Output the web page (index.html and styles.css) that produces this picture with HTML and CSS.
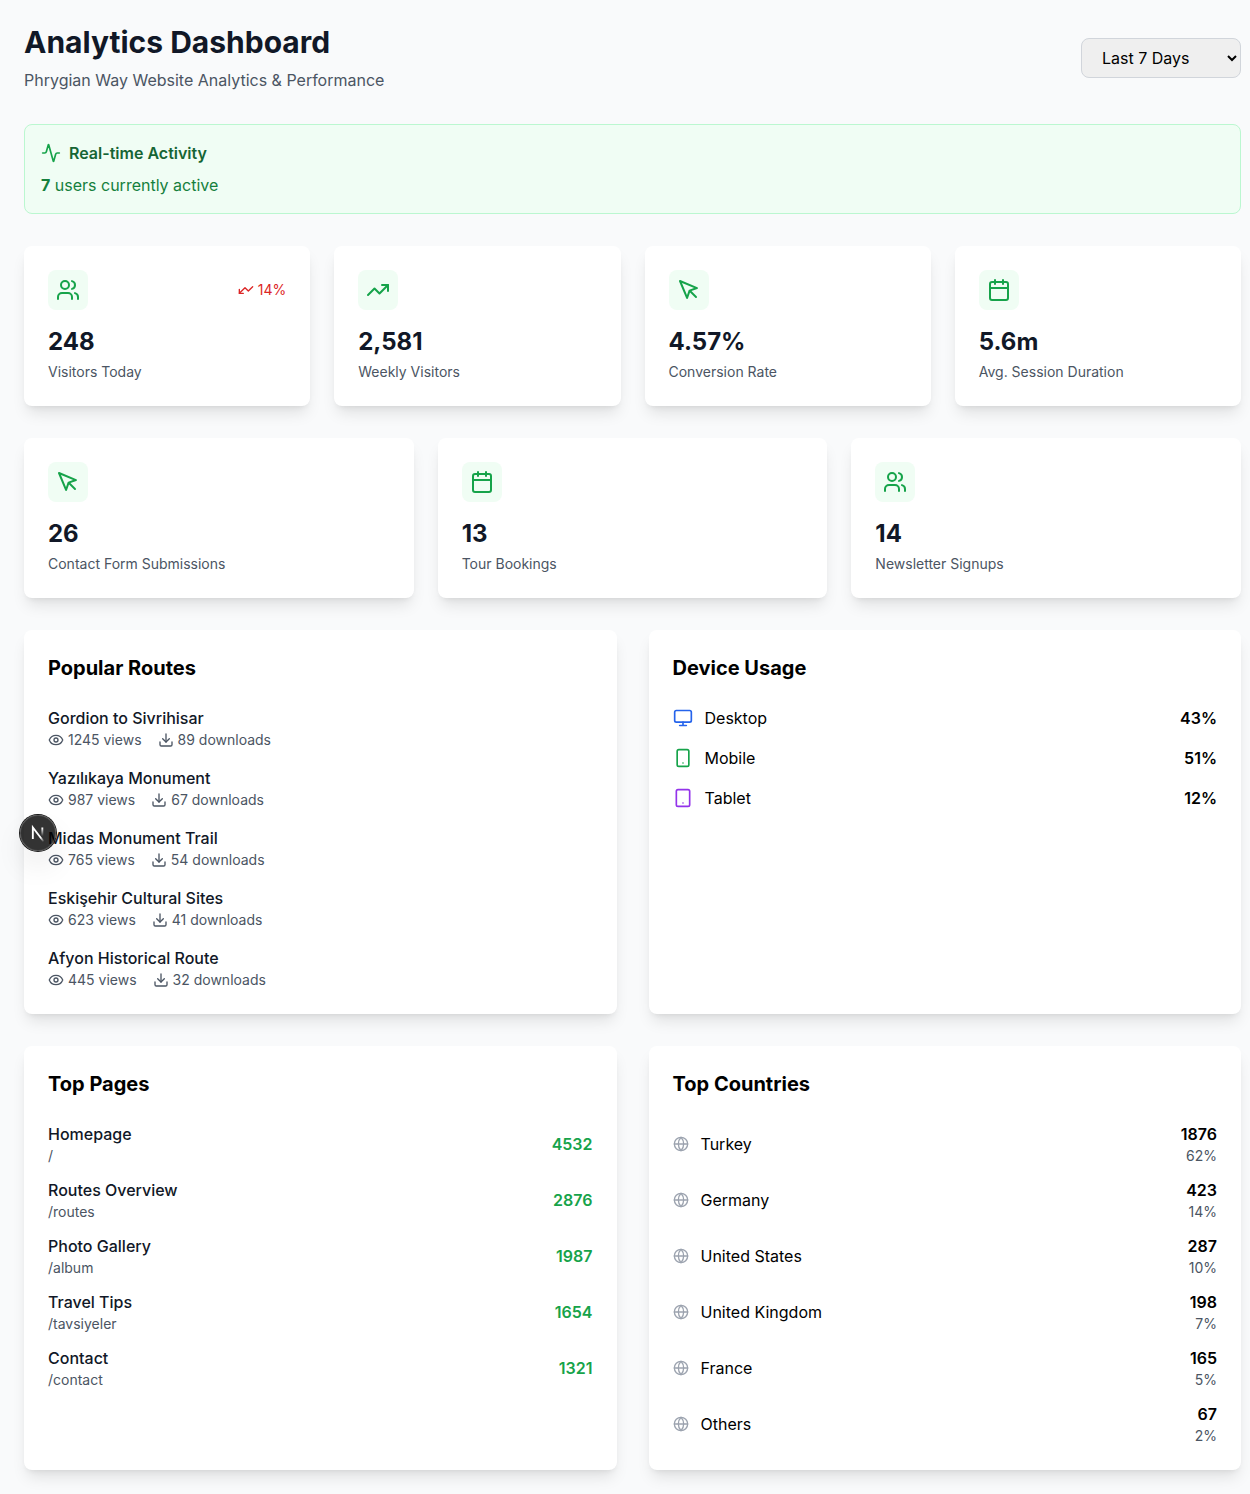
FILE: index.html
```
<!DOCTYPE html>
<html lang="en">
<head>
<meta charset="utf-8">
<meta name="viewport" content="width=device-width, initial-scale=1">
<title>Analytics Dashboard</title>
<link rel="stylesheet" href="styles.css">
</head>
<body>
<svg class="sprite" aria-hidden="true">
  <symbol id="users" viewBox="0 0 24 24"><path d="M16 21v-2a4 4 0 0 0-4-4H6a4 4 0 0 0-4 4v2"/><circle cx="9" cy="7" r="4"/><path d="M22 21v-2a4 4 0 0 0-3-3.87"/><path d="M16 3.13a4 4 0 0 1 0 7.75"/></symbol>
  <symbol id="trend" viewBox="0 0 24 24"><path d="M22 7 13.5 15.5 8.5 10.5 2 17"/><path d="M16 7h6v6"/></symbol>
  <symbol id="pointer" viewBox="0 0 24 24"><path d="m3 3 7.07 16.97 2.51-7.39 7.39-2.51L3 3z"/><path d="m13 13 6 6"/></symbol>
  <symbol id="calendar" viewBox="0 0 24 24"><path d="M8 2v4M16 2v4"/><rect width="18" height="18" x="3" y="4" rx="2"/><path d="M3 10h18"/></symbol>
  <symbol id="activity" viewBox="0 0 24 24"><path d="M22 12h-2.48a2 2 0 0 0-1.93 1.46l-2.35 8.36a.25.25 0 0 1-.48 0L9.24 2.18a.25.25 0 0 0-.48 0l-2.35 8.36A2 2 0 0 1 4.49 12H2"/></symbol>
  <symbol id="eye" viewBox="0 0 24 24"><path d="M2.062 12.348a1 1 0 0 1 0-.696 10.75 10.75 0 0 1 19.876 0 1 1 0 0 1 0 .696 10.75 10.75 0 0 1-19.876 0"/><circle cx="12" cy="12" r="3"/></symbol>
  <symbol id="download" viewBox="0 0 24 24"><path d="M21 15v4a2 2 0 0 1-2 2H5a2 2 0 0 1-2-2v-4"/><path d="m7 10 5 5 5-5"/><path d="M12 15V3"/></symbol>
  <symbol id="monitor" viewBox="0 0 24 24"><rect width="20" height="14" x="2" y="3" rx="2"/><path d="M8 21h8M12 17v4"/></symbol>
  <symbol id="phone" viewBox="0 0 24 24"><rect width="14" height="20" x="5" y="2" rx="2"/><path d="M12 18h.01"/></symbol>
  <symbol id="tablet" viewBox="0 0 24 24"><rect width="16" height="20" x="4" y="2" rx="2"/><path d="M12 18h.01"/></symbol>
  <symbol id="globe" viewBox="0 0 24 24"><circle cx="12" cy="12" r="10"/><path d="M12 2a14.5 14.5 0 0 0 0 20 14.5 14.5 0 0 0 0-20"/><path d="M2 12h20"/></symbol>
</svg>

<main class="page">
  <header class="header">
    <div>
      <h1 class="title">Analytics Dashboard</h1>
      <p class="subtitle">Phrygian Way Website Analytics &amp; Performance</p>
    </div>
    <select class="range" aria-label="Date range">
      <option>Last 7 Days</option>
      <option>Last 30 Days</option>
      <option>Last 90 Days</option>
    </select>
  </header>

  <section class="realtime">
    <h2 class="realtime-title"><svg class="icon icon-md"><use href="#activity"/></svg>Real-time Activity</h2>
    <p class="realtime-text"><strong>7</strong> users currently active</p>
  </section>

  <section class="grid grid-4">
    <article class="card">
      <div class="stat-top">
        <span class="badge"><svg class="icon icon-lg"><use href="#users"/></svg></span>
        <span class="change"><svg class="icon icon-sm flipped"><use href="#trend"/></svg>14%</span>
      </div>
      <p class="value">248</p>
      <p class="label">Visitors Today</p>
    </article>
    <article class="card">
      <div class="stat-top"><span class="badge"><svg class="icon icon-lg"><use href="#trend"/></svg></span></div>
      <p class="value">2,581</p>
      <p class="label">Weekly Visitors</p>
    </article>
    <article class="card">
      <div class="stat-top"><span class="badge"><svg class="icon icon-lg"><use href="#pointer"/></svg></span></div>
      <p class="value">4.57%</p>
      <p class="label">Conversion Rate</p>
    </article>
    <article class="card">
      <div class="stat-top"><span class="badge"><svg class="icon icon-lg"><use href="#calendar"/></svg></span></div>
      <p class="value">5.6m</p>
      <p class="label">Avg. Session Duration</p>
    </article>
  </section>

  <section class="grid grid-3">
    <article class="card">
      <div class="stat-top"><span class="badge"><svg class="icon icon-lg"><use href="#pointer"/></svg></span></div>
      <p class="value">26</p>
      <p class="label">Contact Form Submissions</p>
    </article>
    <article class="card">
      <div class="stat-top"><span class="badge"><svg class="icon icon-lg"><use href="#calendar"/></svg></span></div>
      <p class="value">13</p>
      <p class="label">Tour Bookings</p>
    </article>
    <article class="card">
      <div class="stat-top"><span class="badge"><svg class="icon icon-lg"><use href="#users"/></svg></span></div>
      <p class="value">14</p>
      <p class="label">Newsletter Signups</p>
    </article>
  </section>

  <div class="grid grid-2">
    <section class="card">
      <h2 class="card-title">Popular Routes</h2>
      <ul class="list">
        <li>
          <h3 class="name">Gordion to Sivrihisar</h3>
          <p class="meta"><span class="meta-item"><svg class="icon icon-sm"><use href="#eye"/></svg>1245 views</span><span class="meta-item"><svg class="icon icon-sm"><use href="#download"/></svg>89 downloads</span></p>
        </li>
        <li>
          <h3 class="name">Yazılıkaya Monument</h3>
          <p class="meta"><span class="meta-item"><svg class="icon icon-sm"><use href="#eye"/></svg>987 views</span><span class="meta-item"><svg class="icon icon-sm"><use href="#download"/></svg>67 downloads</span></p>
        </li>
        <li>
          <h3 class="name">Midas Monument Trail</h3>
          <p class="meta"><span class="meta-item"><svg class="icon icon-sm"><use href="#eye"/></svg>765 views</span><span class="meta-item"><svg class="icon icon-sm"><use href="#download"/></svg>54 downloads</span></p>
        </li>
        <li>
          <h3 class="name">Eskişehir Cultural Sites</h3>
          <p class="meta"><span class="meta-item"><svg class="icon icon-sm"><use href="#eye"/></svg>623 views</span><span class="meta-item"><svg class="icon icon-sm"><use href="#download"/></svg>41 downloads</span></p>
        </li>
        <li>
          <h3 class="name">Afyon Historical Route</h3>
          <p class="meta"><span class="meta-item"><svg class="icon icon-sm"><use href="#eye"/></svg>445 views</span><span class="meta-item"><svg class="icon icon-sm"><use href="#download"/></svg>32 downloads</span></p>
        </li>
      </ul>
    </section>

    <section class="card">
      <h2 class="card-title">Device Usage</h2>
      <ul class="list">
        <li class="row"><span class="row-label"><svg class="icon icon-md blue"><use href="#monitor"/></svg>Desktop</span><span class="strong">43%</span></li>
        <li class="row"><span class="row-label"><svg class="icon icon-md green"><use href="#phone"/></svg>Mobile</span><span class="strong">51%</span></li>
        <li class="row"><span class="row-label"><svg class="icon icon-md purple"><use href="#tablet"/></svg>Tablet</span><span class="strong">12%</span></li>
      </ul>
    </section>
  </div>

  <div class="grid grid-2">
    <section class="card">
      <h2 class="card-title">Top Pages</h2>
      <ul class="list list-tight">
        <li class="row"><div><h3 class="name">Homepage</h3><p class="meta">/</p></div><span class="strong green">4532</span></li>
        <li class="row"><div><h3 class="name">Routes Overview</h3><p class="meta">/routes</p></div><span class="strong green">2876</span></li>
        <li class="row"><div><h3 class="name">Photo Gallery</h3><p class="meta">/album</p></div><span class="strong green">1987</span></li>
        <li class="row"><div><h3 class="name">Travel Tips</h3><p class="meta">/tavsiyeler</p></div><span class="strong green">1654</span></li>
        <li class="row"><div><h3 class="name">Contact</h3><p class="meta">/contact</p></div><span class="strong green">1321</span></li>
      </ul>
    </section>

    <section class="card">
      <h2 class="card-title">Top Countries</h2>
      <ul class="list list-tight">
        <li class="row"><span class="row-label"><svg class="icon icon-sm gray"><use href="#globe"/></svg>Turkey</span><div class="figures"><p class="strong">1876</p><p class="meta">62%</p></div></li>
        <li class="row"><span class="row-label"><svg class="icon icon-sm gray"><use href="#globe"/></svg>Germany</span><div class="figures"><p class="strong">423</p><p class="meta">14%</p></div></li>
        <li class="row"><span class="row-label"><svg class="icon icon-sm gray"><use href="#globe"/></svg>United States</span><div class="figures"><p class="strong">287</p><p class="meta">10%</p></div></li>
        <li class="row"><span class="row-label"><svg class="icon icon-sm gray"><use href="#globe"/></svg>United Kingdom</span><div class="figures"><p class="strong">198</p><p class="meta">7%</p></div></li>
        <li class="row"><span class="row-label"><svg class="icon icon-sm gray"><use href="#globe"/></svg>France</span><div class="figures"><p class="strong">165</p><p class="meta">5%</p></div></li>
        <li class="row"><span class="row-label"><svg class="icon icon-sm gray"><use href="#globe"/></svg>Others</span><div class="figures"><p class="strong">67</p><p class="meta">2%</p></div></li>
      </ul>
    </section>
  </div>
</main>

<button class="dev-button" type="button" aria-label="Open Next.js Dev Tools">
  <svg width="36" height="36" viewBox="0 0 36 36" fill="none">
    <defs>
      <linearGradient id="n-diagonal" x1="9.96" y1="11.12" x2="15.48" y2="17.97" gradientUnits="userSpaceOnUse"><stop stop-color="#fff"/><stop offset=".6" stop-color="#fff" stop-opacity="0"/></linearGradient>
      <linearGradient id="n-stem" x1="11.8" y1="1.4" x2="11.79" y2="9.63" gradientUnits="userSpaceOnUse"><stop stop-color="#fff"/><stop offset="1" stop-color="#fff" stop-opacity="0"/></linearGradient>
    </defs>
    <g transform="translate(10.5 11.5)" stroke-width="1.86">
      <path d="M13.3 15.2 2.34 1v11.6" stroke="url(#n-diagonal)"/>
      <path d="M11.825 1v11.6" stroke="url(#n-stem)"/>
    </g>
  </svg>
</button>
</body>
</html>
```
FILE: styles.css
```
* { box-sizing: border-box; }

body {
  position: relative;
  margin: 0;
  background: #f9fafb;
  color: #000;
  font: 16px/24px Inter, "Liberation Sans", sans-serif;
}

h1, h2, h3, p, ul { margin: 0; padding: 0; }
ul { list-style: none; }
.sprite { display: none; }

.page {
  display: flex;
  flex-direction: column;
  gap: 32px;
  padding: 24px 9px 24px 24px;
}

.header {
  display: flex;
  align-items: center;
  justify-content: space-between;
}
.title { font-size: 30px; line-height: 36px; font-weight: 700; color: #111827; }
.subtitle { margin-top: 8px; color: #4b5563; }
.range {
  width: 160px;
  height: 40px;
  padding: 8px 16px;
  border: 1px solid #d1d5db;
  border-radius: 8px;
  background: #efefef;
  color: #000;
  font: inherit;
}

.realtime {
  display: flex;
  flex-direction: column;
  gap: 8px;
  padding: 16px;
  border: 1px solid #bbf7d0;
  border-radius: 8px;
  background: #f0fdf4;
  color: #15803d;
}
.realtime-title {
  display: flex;
  align-items: center;
  gap: 8px;
  font-size: 16px;
  line-height: 24px;
  font-weight: 600;
  color: #166534;
}
.realtime-title .icon { color: #16a34a; }

.grid { display: grid; gap: 24px; }
.grid-4 { grid-template-columns: repeat(4, 1fr); }
.grid-3 { grid-template-columns: repeat(3, 1fr); }
.grid-2 { grid-template-columns: repeat(2, 1fr); gap: 32px; }

.card {
  padding: 24px;
  border-radius: 8px;
  background: #fff;
  box-shadow: 0 10px 15px -3px rgb(0 0 0 / 10%), 0 4px 6px -4px rgb(0 0 0 / 10%);
}
.card-title { margin-bottom: 24px; font-size: 20px; line-height: 28px; font-weight: 700; }

.stat-top {
  display: flex;
  align-items: center;
  justify-content: space-between;
  margin-bottom: 16px;
}
.badge {
  display: flex;
  padding: 8px;
  border-radius: 8px;
  background: #f0fdf4;
  color: #16a34a;
}
.change {
  display: flex;
  align-items: center;
  gap: 4px;
  font-size: 14px;
  line-height: 20px;
  color: #dc2626;
}
.value { font-size: 24px; line-height: 32px; font-weight: 700; color: #111827; }
.label { margin-top: 4px; font-size: 14px; line-height: 20px; color: #4b5563; }

.list { display: flex; flex-direction: column; gap: 16px; }
.list-tight { gap: 12px; }
.row { display: flex; align-items: center; justify-content: space-between; }
.row-label { display: flex; align-items: center; gap: 12px; }
.name { font-size: 16px; line-height: 24px; font-weight: 500; color: #111827; }
.meta { display: flex; gap: 16px; font-size: 14px; line-height: 20px; color: #4b5563; }
.meta-item { display: flex; align-items: center; gap: 4px; }
.strong { font-weight: 600; }
.figures { text-align: right; }
.figures .meta { display: block; }

.icon {
  flex: none;
  fill: none;
  stroke: currentColor;
  stroke-width: 2;
  stroke-linecap: round;
  stroke-linejoin: round;
}
.icon-sm { width: 16px; height: 16px; }
.icon-md { width: 20px; height: 20px; }
.icon-lg { width: 24px; height: 24px; }
.flipped { transform: rotate(180deg); }

.blue { color: #2563eb; }
.green { color: #16a34a; }
.purple { color: #9333ea; }
.gray { color: #9ca3af; }

.dev-button {
  position: absolute;
  top: 815px;
  left: 20px;
  width: 36px;
  height: 36px;
  padding: 0;
  border: 0;
  border-radius: 50%;
  background: rgb(0 0 0 / 80%);
  box-shadow: 0 0 0 1px #171717, inset 0 0 0 1px hsl(0 0% 100% / 14%), 0 16px 32px -8px rgb(0 0 0 / 24%);
}
.dev-button svg { display: block; }
```
